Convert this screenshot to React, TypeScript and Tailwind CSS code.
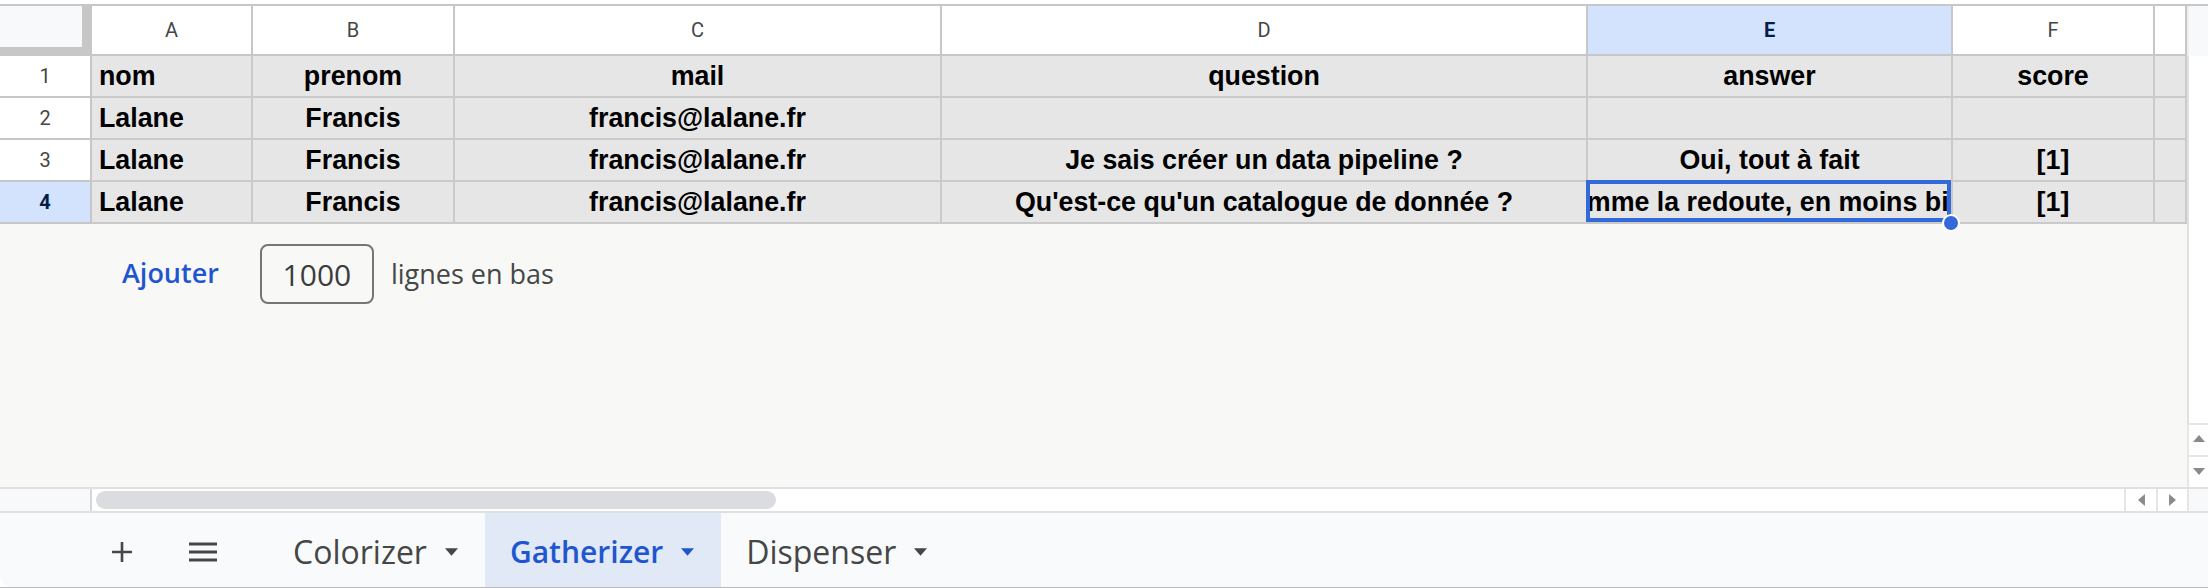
import React from 'react';

type Col = { letter: string; cls: string; align: 'left' | 'center' };

const COLS: Col[] = [
  { letter: 'A', cls: 'w-[161px]', align: 'left' },
  { letter: 'B', cls: 'w-[202px]', align: 'center' },
  { letter: 'C', cls: 'w-[487px]', align: 'center' },
  { letter: 'D', cls: 'w-[646px]', align: 'center' },
  { letter: 'E', cls: 'w-[365px]', align: 'center' },
  { letter: 'F', cls: 'w-[202px]', align: 'center' },
  { letter: '', cls: 'w-[32px]', align: 'center' },
];

const ROWS: string[][] = [
  ['nom', 'prenom', 'mail', 'question', 'answer', 'score', ''],
  ['Lalane', 'Francis', 'francis@lalane.fr', '', '', '', ''],
  ['Lalane', 'Francis', 'francis@lalane.fr', 'Je sais créer un data pipeline ?', 'Oui, tout à fait', '[1]', ''],
  ['Lalane', 'Francis', 'francis@lalane.fr', "Qu'est-ce qu'un catalogue de donnée ?", 'Comme la redoute, en moins bien', '[1]', ''],
];

const SEL_ROW = 3;
const SEL_COL = 4;

function Tri({ dir, cls }: { dir: 'up' | 'down' | 'left' | 'right'; cls: string }) {
  const pts =
    dir === 'up' ? '0,8 7,0 14,8' : dir === 'down' ? '0,0 14,0 7,8' : dir === 'left' ? '8,0 8,14 0,7' : '0,0 0,14 8,7';
  const w = dir === 'up' || dir === 'down' ? 14 : 8;
  const h = dir === 'up' || dir === 'down' ? 8 : 14;
  return (
    <svg width={w} height={h} viewBox={`0 0 ${w} ${h}`} className={cls}>
      <polygon points={pts} fill="currentColor" />
    </svg>
  );
}

function HeaderRow() {
  return (
    <div className="flex h-[50px] bg-white font-['Roboto',sans-serif] text-[20px] text-[#444746]">
      <div className="w-[92px] bg-[#f8f9fa] border-r-[10px] border-b-[9px] border-[#c7c7c7]" />
      {COLS.map((c, i) => (
        <div
          key={i}
          className={`${c.cls} flex items-center justify-center border-r-2 border-b-2 border-[#c7c7c7] ${
            i === SEL_COL ? 'bg-[#d3e3fd] font-bold text-[#041e49]' : ''
          }`}
        >
          {c.letter}
        </div>
      ))}
    </div>
  );
}

function DataRow({ cells, n }: { cells: string[]; n: number }) {
  const selRow = n - 1 === SEL_ROW;
  return (
    <div className="flex h-[42px]">
      <div
        className={`w-[92px] flex items-center justify-center border-r-2 border-b-2 border-[#c7c7c7] font-['Roboto',sans-serif] text-[20px] ${
          selRow ? 'bg-[#d3e3fd] font-bold text-[#041e49]' : 'bg-white text-[#444746]'
        }`}
      >
        {n}
      </div>
      {cells.map((v, i) => {
        const sel = selRow && i === SEL_COL;
        return (
          <div
            key={i}
            className={`${COLS[i].cls} relative flex items-center bg-[#e6e6e6] border-r-2 border-b-2 border-[#cacaca] font-['Liberation_Sans',Arial,sans-serif] font-bold text-[26.8px] text-black ${
              COLS[i].align === 'left' ? 'justify-start pl-[7px]' : 'justify-center'
            }`}
          >
            <span className={`block w-full overflow-hidden whitespace-nowrap flex justify-center ${sel ? 'pl-[2px]' : ''}`}>
              <span className={COLS[i].align === 'left' ? 'mr-auto' : sel ? 'shrink-0 -translate-x-[5px]' : 'shrink-0'}>
                {v}
              </span>
            </span>
            {sel && (
              <>
                <div className="absolute -left-[2px] -top-[2px] right-0 bottom-0 border-[4px] border-[#3469d9] z-10" />
                <div className="absolute -right-[9px] -bottom-[10px] w-[18px] h-[18px] rounded-full bg-[#3469d9] border-2 border-white z-20" />
              </>
            )}
          </div>
        );
      })}
    </div>
  );
}

function Tab({ label, active }: { label: string; active?: boolean }) {
  return (
    <div
      className={`h-full flex items-center gap-[18px] pl-[25px] pr-[27px] pt-[3px] ${
        active ? 'bg-[#e1e9f7] text-[#1f56cf] font-semibold text-[30px]' : 'text-[#444746] text-[32px]'
      }`}
    >
      <span>{label}</span>
      <Tri dir="down" cls={active ? 'text-[#1f56cf] w-[13px] h-[8px]' : 'text-[#444746] w-[13px] h-[8px]'} />
    </div>
  );
}

export default function App() {
  return (
    <div className="w-[2208px] h-[588px] flex flex-col bg-white overflow-hidden">
      <div className="h-[4px] bg-white" />

      <div className="flex-1 min-h-0 flex border-t-2 border-[#c7c7c7]">
        <div className="w-[2187px] flex flex-col">
          <HeaderRow />
          {ROWS.map((r, i) => (
            <DataRow key={i} cells={r} n={i + 1} />
          ))}
          <div className="flex-1 bg-[#f8f8f7] pt-[20px]">
            <div className="flex items-center pl-[122px] font-['Open_Sans',sans-serif] text-[27px]">
              <button className="font-semibold text-[#1f56cf] -mt-[2px]">Ajouter</button>
              <div className="ml-[41px] w-[114px] h-[60px] rounded-[8px] border-2 border-[#747775] flex items-center justify-center text-[30px] text-[#3c3c3c]">
                1000
              </div>
              <span className="ml-[17px] text-[#444746]">lignes en bas</span>
            </div>
          </div>
        </div>

        <div className="flex-1 flex flex-col">
          <div className="h-[50px] bg-[#f8f9fa] border-l-2 border-[#eeeeee]" />
          <div className="flex-1 bg-white border-l-2 border-[#e0e0e0]" />
          <div className="h-[32px] bg-white border-l-2 border-t-2 border-[#e6e6e6] flex items-center justify-center pb-[4px]">
            <Tri dir="up" cls="text-[#8a8a8a] w-[12px] h-[7px]" />
          </div>
          <div className="h-[32px] bg-white border-l-2 border-t-2 border-[#e6e6e6] flex items-center justify-center pb-[2px]">
            <Tri dir="down" cls="text-[#8a8a8a] w-[12px] h-[7px]" />
          </div>
        </div>
      </div>

      <div className="h-[26px] flex border-t-2 border-b-2 border-[#e0e0e0]">
        <div className="w-[92px] bg-[#f8f9fa] border-r-2 border-[#d6d6d6]" />
        <div className="flex-1 bg-white flex items-center pl-[4px]">
          <div className="w-[680px] h-[18px] rounded-full bg-[#dadce0]" />
        </div>
        <div className="w-[32px] bg-white border-l-2 border-[#e6e6e6] flex items-center justify-center">
          <Tri dir="left" cls="text-[#8a8a8a] w-[7px] h-[12px]" />
        </div>
        <div className="w-[31px] bg-white border-l-2 border-[#e6e6e6] flex items-center justify-center">
          <Tri dir="right" cls="text-[#8a8a8a] w-[7px] h-[12px]" />
        </div>
        <div className="w-[21px] bg-[#f8f9fa] border-l-2 border-[#e6e6e6]" />
      </div>

      <div className="h-[74px] flex items-stretch bg-[#f9fafc] rounded-bl-[12px] font-['Open_Sans',sans-serif]">
        <div className="ml-[101px] w-[42px] flex items-center justify-center pt-[3px]">
          <svg width="22" height="22" viewBox="0 0 22 22" className="text-[#444746]">
            <path d="M11 1v20M1 11h20" stroke="currentColor" strokeWidth="2.6" />
          </svg>
        </div>
        <div className="ml-[39px] w-[42px] flex items-center justify-center pt-[3px]">
          <svg width="28" height="20" viewBox="0 0 28 20" className="text-[#444746]">
            <path d="M0 2h28M0 10h28M0 18h28" stroke="currentColor" strokeWidth="3" />
          </svg>
        </div>
        <div className="ml-[44px] flex items-stretch">
          <Tab label="Colorizer" />
          <Tab label="Gatherizer" active />
          <Tab label="Dispenser" />
        </div>
      </div>

      <div className="h-[1px] bg-[#b9b9b9]" />
    </div>
  );
}
